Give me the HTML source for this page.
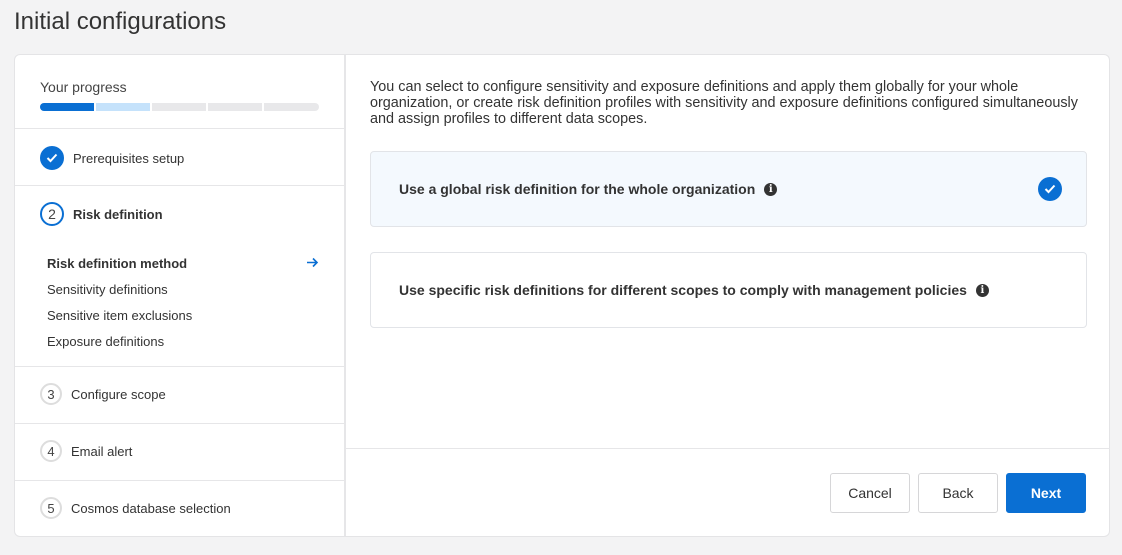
<!DOCTYPE html><html><head><style>
*{box-sizing:border-box;margin:0;padding:0}
body{width:1122px;height:555px;background:#f3f3f4;font-family:"Liberation Sans",sans-serif;color:#333;position:relative;overflow:hidden}
.a{position:absolute}
h1{position:absolute;left:14px;top:8px;font-weight:normal;font-size:24px;color:#333}
.card{left:14px;top:54px;width:1096px;height:483px;background:#fff;border:1px solid #e4e4e6;border-radius:6px}
.hl{position:absolute;left:0;height:1px;background:#e6e6e8}
.step{position:absolute;left:25px;font-size:13px;color:#333;display:flex;align-items:center}
.num{width:22px;height:22px;border-radius:50%;border:2px solid #ddd;font-size:13px;display:flex;align-items:center;justify-content:center;margin-right:9px;color:#444}
.sub{position:absolute;left:32px;font-size:13px;color:#333}
.opt{position:absolute;left:355px;width:717px;height:76px;border:1px solid #e2e4e8;border-radius:4px;font-size:14px;font-weight:bold;color:#333;padding-left:28px;display:flex;align-items:center}
.info{display:inline-flex;width:13px;height:13px;border-radius:50%;background:#333;color:#fff;font-size:10px;align-items:center;justify-content:center;margin-left:9px;font-family:"DejaVu Serif",serif;font-weight:bold}
.btn{position:absolute;top:418px;width:80px;height:40px;border:1px solid #d6d6d8;border-radius:3px;font-size:14px;display:flex;align-items:center;justify-content:center;color:#333;background:#fff}
</style></head><body>
<h1>Initial configurations</h1>
<div class="a card">
 <div class="a" style="left:25px;top:24px;font-size:14px;color:#444">Your progress</div>
 <div class="a" style="left:25px;top:48px;width:54px;height:8px;background:#0a6fd3;border-radius:4px 0 0 4px"></div>
 <div class="a" style="left:81px;top:48px;width:54px;height:8px;background:#c5e2fb"></div>
 <div class="a" style="left:137px;top:48px;width:54px;height:8px;background:#e8e8ea"></div>
 <div class="a" style="left:193px;top:48px;width:54px;height:8px;background:#e8e8ea"></div>
 <div class="a" style="left:249px;top:48px;width:55px;height:8px;background:#e8e8ea;border-radius:0 4px 4px 0"></div>
 <div class="hl" style="top:73px;width:330px"></div>
 <div class="step" style="top:91px"><div class="num" style="background:#0a6fd3;border-color:#0a6fd3;width:24px;height:24px"><svg width="12" height="10" viewBox="0 0 12 10"><path d="M1.5 5l3 3 6-6.5" stroke="#fff" stroke-width="2" fill="none"/></svg></div>Prerequisites setup</div>
 <div class="hl" style="top:130px;width:330px"></div>
 <div class="step" style="top:147px;font-weight:bold"><div class="num" style="border-color:#0a6fd3;width:24px;height:24px;font-weight:normal;font-size:14px">2</div>Risk definition</div>
 <div class="sub" style="top:201px;font-weight:bold;color:#333">Risk definition method</div>
 <svg class="a" style="left:291px;top:202px" width="13" height="11" viewBox="0 0 13 11"><path d="M1 5.5h10M7 1.5l4 4-4 4" stroke="#0a6fd3" stroke-width="1.6" fill="none"/></svg>
 <div class="sub" style="top:227px">Sensitivity definitions</div>
 <div class="sub" style="top:253px">Sensitive item exclusions</div>
 <div class="sub" style="top:279px">Exposure definitions</div>
 <div class="hl" style="top:311px;width:330px"></div>
 <div class="step" style="top:328px"><div class="num">3</div>Configure scope</div>
 <div class="hl" style="top:368px;width:330px"></div>
 <div class="step" style="top:385px"><div class="num">4</div>Email alert</div>
 <div class="hl" style="top:425px;width:330px"></div>
 <div class="step" style="top:442px"><div class="num">5</div>Cosmos database selection</div>
 <div class="a" style="left:329px;top:0;width:2px;height:481px;background:#e6e6e8"></div>
 <div class="a" style="left:355px;top:24px;width:720px;font-size:14.4px;line-height:16px;color:#333">You can select to configure sensitivity and exposure definitions and apply them globally for your whole<br>organization, or create risk definition profiles with sensitivity and exposure definitions configured simultaneously<br>and assign profiles to different data scopes.</div>
 <div class="opt" style="top:96px;background:#f4f9fe">Use a global risk definition for the whole organization<span class="info">i</span>
  <div class="a" style="right:24px;top:25px;width:24px;height:24px;border-radius:50%;background:#0a6fd3;display:flex;align-items:center;justify-content:center"><svg width="12" height="10" viewBox="0 0 12 10"><path d="M1.5 5l3 3 6-6.5" stroke="#fff" stroke-width="2" fill="none"/></svg></div></div>
 <div class="opt" style="top:197px">Use specific risk definitions for different scopes to comply with management policies<span class="info">i</span></div>
 <div class="a" style="left:331px;top:393px;width:764px;height:1px;background:#e6e6e8"></div>
 <div class="btn" style="left:815px">Cancel</div>
 <div class="btn" style="left:903px">Back</div>
 <div class="btn" style="left:991px;background:#0a6fd3;border-color:#0a6fd3;color:#fff;font-weight:bold">Next</div>
</div>
</body></html>
